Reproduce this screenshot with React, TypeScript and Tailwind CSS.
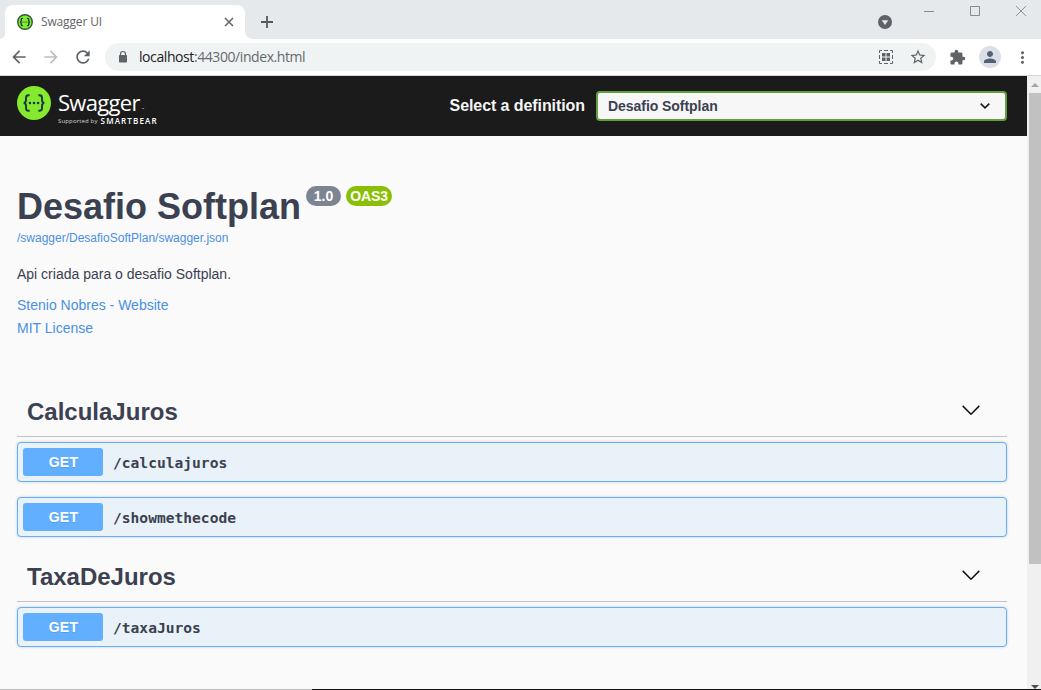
import React from "react";
import {
  MdArrowBack,
  MdArrowForward,
  MdExtension,
  MdMoreVert,
  MdPerson,
  MdRefresh,
  MdStarBorder,
} from "react-icons/md";

function SwaggerMark({ className, outlined = false }: { className: string; outlined?: boolean }) {
  return (
    <svg viewBox="0 0 34 34" className={className}>
      <circle cx="17" cy="17" r={outlined ? 15.5 : 17} fill="#85ea2d" stroke={outlined ? "#2f5a36" : "none"} strokeWidth={outlined ? 3 : 0} />
      <g fill="none" stroke="#173647" strokeWidth={outlined ? 2.8 : 1.9}>
        <path d="M12.600 9.200h-1.100c-1.800 0-2.500.8-2.500 2.500v2.400c0 1.700-.6 2.700-2.300 2.900 1.700.2 2.300 1.200 2.300 2.900v2.400c0 1.700.7 2.500 2.500 2.500h1.100" />
        <path d="M21.400 9.200h1.100c1.800 0 2.500.8 2.500 2.500v2.400c0 1.700.6 2.700 2.300 2.900-1.700.2-2.300 1.200-2.300 2.900v2.400c0 1.700-.7 2.500-2.500 2.500h-1.100" />
      </g>
      <g fill="#173647">
        <circle cx="12.9" cy="17" r="1.3" />
        <circle cx="17" cy="17" r="1.3" />
        <circle cx="21.1" cy="17" r="1.3" />
      </g>
    </svg>
  );
}

function TabStrip() {
  return (
    <div className="flex h-[39px] bg-[#e6e9ec]">
      <div className="mt-[5px] flex w-[5px] items-end bg-white">
        <div className="h-full w-full rounded-br-[5px] bg-[#e6e9ec]" />
      </div>
      <div className="mt-[5px] flex h-[34px] w-[240px] items-center rounded-t-[8px] bg-white pl-3 pr-[11px]">
        <SwaggerMark outlined className="h-4 w-4" />
        <span className="ml-2 flex-1 font-['Open_Sans',sans-serif] text-[12px] tracking-[-0.15px] text-[#5f6368]">Swagger UI</span>
        <svg viewBox="0 0 10 10" className="h-[10px] w-[10px]">
          <path d="M1 1l8 8M9 1l-8 8" stroke="#5f6368" strokeWidth="1.5" />
        </svg>
      </div>
      <div className="mt-[5px] w-[8px] bg-white">
        <div className="h-full w-full rounded-bl-[8px] bg-[#e6e9ec]" />
      </div>
      <svg viewBox="0 0 12 12" className="ml-[8px] mt-4 h-3 w-3">
        <path d="M6 0v12M0 6h12" stroke="#56595d" strokeWidth="1.8" />
      </svg>
      <div className="flex-1" />
      <svg viewBox="0 0 14 14" className="mt-[15px] h-[14px] w-[14px]">
        <circle cx="7" cy="7" r="7" fill="#5f6368" />
        <path d="M3.700 5.200h6.600L7 10z" fill="#e6e9ec" />
      </svg>
      <svg viewBox="0 0 104 12" className="ml-[32px] mr-[13px] mt-[5px] h-3 w-[104px]" fill="none">
        <path d="M0 6.500h10" stroke="#858b8e" />
        <path d="M46.500 1.500h9v9h-9z" stroke="#858b8e" />
        <path d="M92 1l10 10M102 1l-10 10" stroke="#8d8585" strokeWidth=".9" />
      </svg>
    </div>
  );
}

function AddressBar() {
  return (
    <div className="flex h-[37px] items-center border-b border-[#d6d8da] bg-white text-[#5f6368]">
      <MdArrowBack className="ml-[9px] h-5 w-5" />
      <MdArrowForward className="ml-[12px] h-5 w-5 text-[#bcbec0]" />
      <MdRefresh className="ml-[12px] h-5 w-5" />
      <div className="ml-[12px] flex h-7 w-[831px] items-center rounded-full bg-[#f0f3f4]">
        <svg viewBox="0 0 14 14" className="ml-[11px] h-[14px] w-[14px]">
          <path d="M4.500 6V4a2.500 2.500 0 0 1 5 0v2" fill="none" stroke="#5f6368" strokeWidth="1.200" />
          <rect x="3" y="5" width="8" height="7.500" rx=".8" fill="#5f6368" />
        </svg>
        <span className="-mt-px ml-[9px] flex-1 font-['Open_Sans',sans-serif] text-[14px] tracking-[-0.42px] text-[#65696e]">
          <span className="text-[#202124]">localhost</span>:44300/index.html
        </span>
        <svg viewBox="0 0 14 14" className="mr-[16px] h-[14px] w-[14px]" fill="none" stroke="#5f6368">
          <path d="M.5 3V.5H3M11 .5h2.500V3M13.500 11v2.500H11M3 13.500H.5V11M5 .5h4M5 13.500h4M.5 5v4M13.500 5v4" />
          <path d="M3 3h3.500v3.500H3zM7.500 3H11v3.500H7.500zM3 7.500h3.500V11H3zM7.500 7.500H11V11H7.500z" fill="#5f6368" stroke="none" />
        </svg>
        <MdStarBorder className="mr-[9px] h-[18px] w-[18px]" />
      </div>
      <MdExtension className="ml-[13px] h-[17px] w-[17px]" />
      <div className="ml-[13px] flex h-[22px] w-[22px] items-center justify-center rounded-full bg-[#dadfe8]">
        <MdPerson className="h-[18px] w-[18px] text-[#566075]" />
      </div>
      <MdMoreVert className="ml-[12px] h-[19px] w-[19px]" />
    </div>
  );
}

function TopBar() {
  return (
    <header className="flex h-[60px] items-center bg-[#1b1b1b] pl-[17px] pr-5">
      <SwaggerMark className="mb-[6px] h-[34px] w-[34px]" />
      <div className="ml-[7px] h-[60px] w-[110px] pt-[12px] font-['Open_Sans',sans-serif] text-white">
        <div className="flex h-[28px] items-center text-[22px] font-normal leading-[28px] tracking-[-0.7px]">
          Swagger<span className="mb-[-14px] ml-[2px] text-[3px] leading-none tracking-normal">™</span>
        </div>
        <div className="mt-px flex h-[8px] items-center whitespace-nowrap leading-[8px]">
          <span className="text-[6px] tracking-[0.15px] text-[#d5d5d5]">Supported by</span>
          <span className="ml-[3px] text-[8px] font-semibold tracking-[1.15px]">SMARTBEAR</span>
        </div>
      </div>
      <div className="flex-1" />
      <span className="mr-[11px] text-[16px] font-bold tracking-[-0.08px] text-[#f5f5f5]">Select a definition</span>
      <div className="flex h-[30px] w-[411px] items-center justify-between rounded-[4px] border-2 border-[#62a03f] bg-[#f7f7f7] pl-[10px] pr-[15px]">
        <span className="text-[14px] font-bold tracking-[-0.05px] text-[#3b4151]">Desafio Softplan</span>
        <svg viewBox="0 0 10 6" className="h-[6px] w-[10px]">
          <path d="M.7 .7L5 4.800 9.300 .7" fill="none" stroke="#1b1b1b" strokeWidth="1.6" />
        </svg>
      </div>
    </header>
  );
}

function ApiInfo() {
  return (
    <section className="h-[248px] pt-[49px] text-[14px] text-[#4990e2]">
      <div className="flex items-start">
        <h1 className="w-[283px] whitespace-nowrap text-[36px] font-bold leading-[43px] text-[#3b4151]">Desafio Softplan</h1>
        <span className="ml-[6px] mt-[1px] flex h-5 w-[35px] items-center justify-center rounded-full bg-[#7d8492] text-[14px] font-bold text-white">1.0</span>
        <span className="ml-[5px] mt-[1px] flex h-5 w-[46px] items-center justify-center rounded-full bg-[#89bf04] text-[14px] font-bold tracking-[-0.1px] text-white">OAS3</span>
      </div>
      <a className="mt-px block h-[18px] text-[12px] leading-[18px]">/swagger/DesafioSoftPlan/swagger.json</a>
      <p className="mt-[18px] leading-[18px] text-[#3b4151]">Api criada para o desafio Softplan.</p>
      <a className="mt-[13px] block leading-[18px]">Stenio Nobres - Website</a>
      <a className="mt-[5px] block leading-[18px]">MIT License</a>
    </section>
  );
}

function TagSection({ name, paths }: { name: string; paths: string[] }) {
  return (
    <section>
      <div className="flex h-[53px] items-center justify-between border-b border-[#c1c3c8] pl-[10px] pr-[27px]">
        <h2 className="mt-[3px] text-[24px] font-bold text-[#3b4151]">{name}</h2>
        <svg viewBox="0 0 18 10" className="h-[10px] w-[18px]">
          <path d="M.7 .9L9 9.200 17.300 .9" fill="none" stroke="#111" strokeWidth="1.5" />
        </svg>
      </div>
      <div className="flex flex-col gap-[15px] pb-[10px] pt-[5px]">
        {paths.map((path) => (
          <div key={path} className="flex h-10 items-center rounded-[4px] border border-[#61affe] bg-[#e9f1f9] pl-[5px] shadow-[0_0_3px_rgba(0,0,0,0.19)]">
            <span className="flex h-7 w-20 items-center justify-center rounded-[3px] bg-[#61affe] pl-[1px] text-[14px] font-bold tracking-[0.3px] text-white [text-shadow:0_1px_0_rgba(0,0,0,0.1)]">GET</span>
            <span className="ml-[10px] mt-[2px] font-['DejaVu_Sans_Mono',monospace] text-[14.600px] font-bold text-[#3b4151]">{path}</span>
          </div>
        ))}
      </div>
    </section>
  );
}

function ScrollBar() {
  return (
    <div className="flex w-[14px] flex-col items-end justify-between bg-[#f0f0f0]">
      <div className="flex h-[17px] w-3 items-center justify-center">
        <svg viewBox="0 0 8 4" className="h-1 w-2"><path d="M0 4l4-4 4 4z" fill="#a3a3a3" /></svg>
      </div>
      <div className="h-[471px] w-3 bg-[#c1c1c1]" />
      <div className="flex flex-1 items-end pr-[2px]">
        <svg viewBox="0 0 8 4" className="h-1 w-2"><path d="M0 0l4 4 4-4z" fill="#505050" /></svg>
      </div>
    </div>
  );
}

export default function App() {
  return (
    <div className="flex h-[690px] w-[1041px] flex-col overflow-hidden bg-[#fafafa] font-['Liberation_Sans',Arial,sans-serif]">
      <TabStrip />
      <AddressBar />
      <div className="flex h-[613px]">
        <div className="flex-1">
          <TopBar />
          <main className="pl-[17px] pr-5">
            <ApiInfo />
            <TagSection name="CalculaJuros" paths={["/calculajuros", "/showmethecode"]} />
            <div className="h-[2px]" />
            <TagSection name="TaxaDeJuros" paths={["/taxaJuros"]} />
          </main>
        </div>
        <ScrollBar />
      </div>
      <div className="flex h-px">
        <div className="w-[312px] bg-[#bcbcbc]" />
        <div className="flex-1 bg-[#111]" />
      </div>
    </div>
  );
}
